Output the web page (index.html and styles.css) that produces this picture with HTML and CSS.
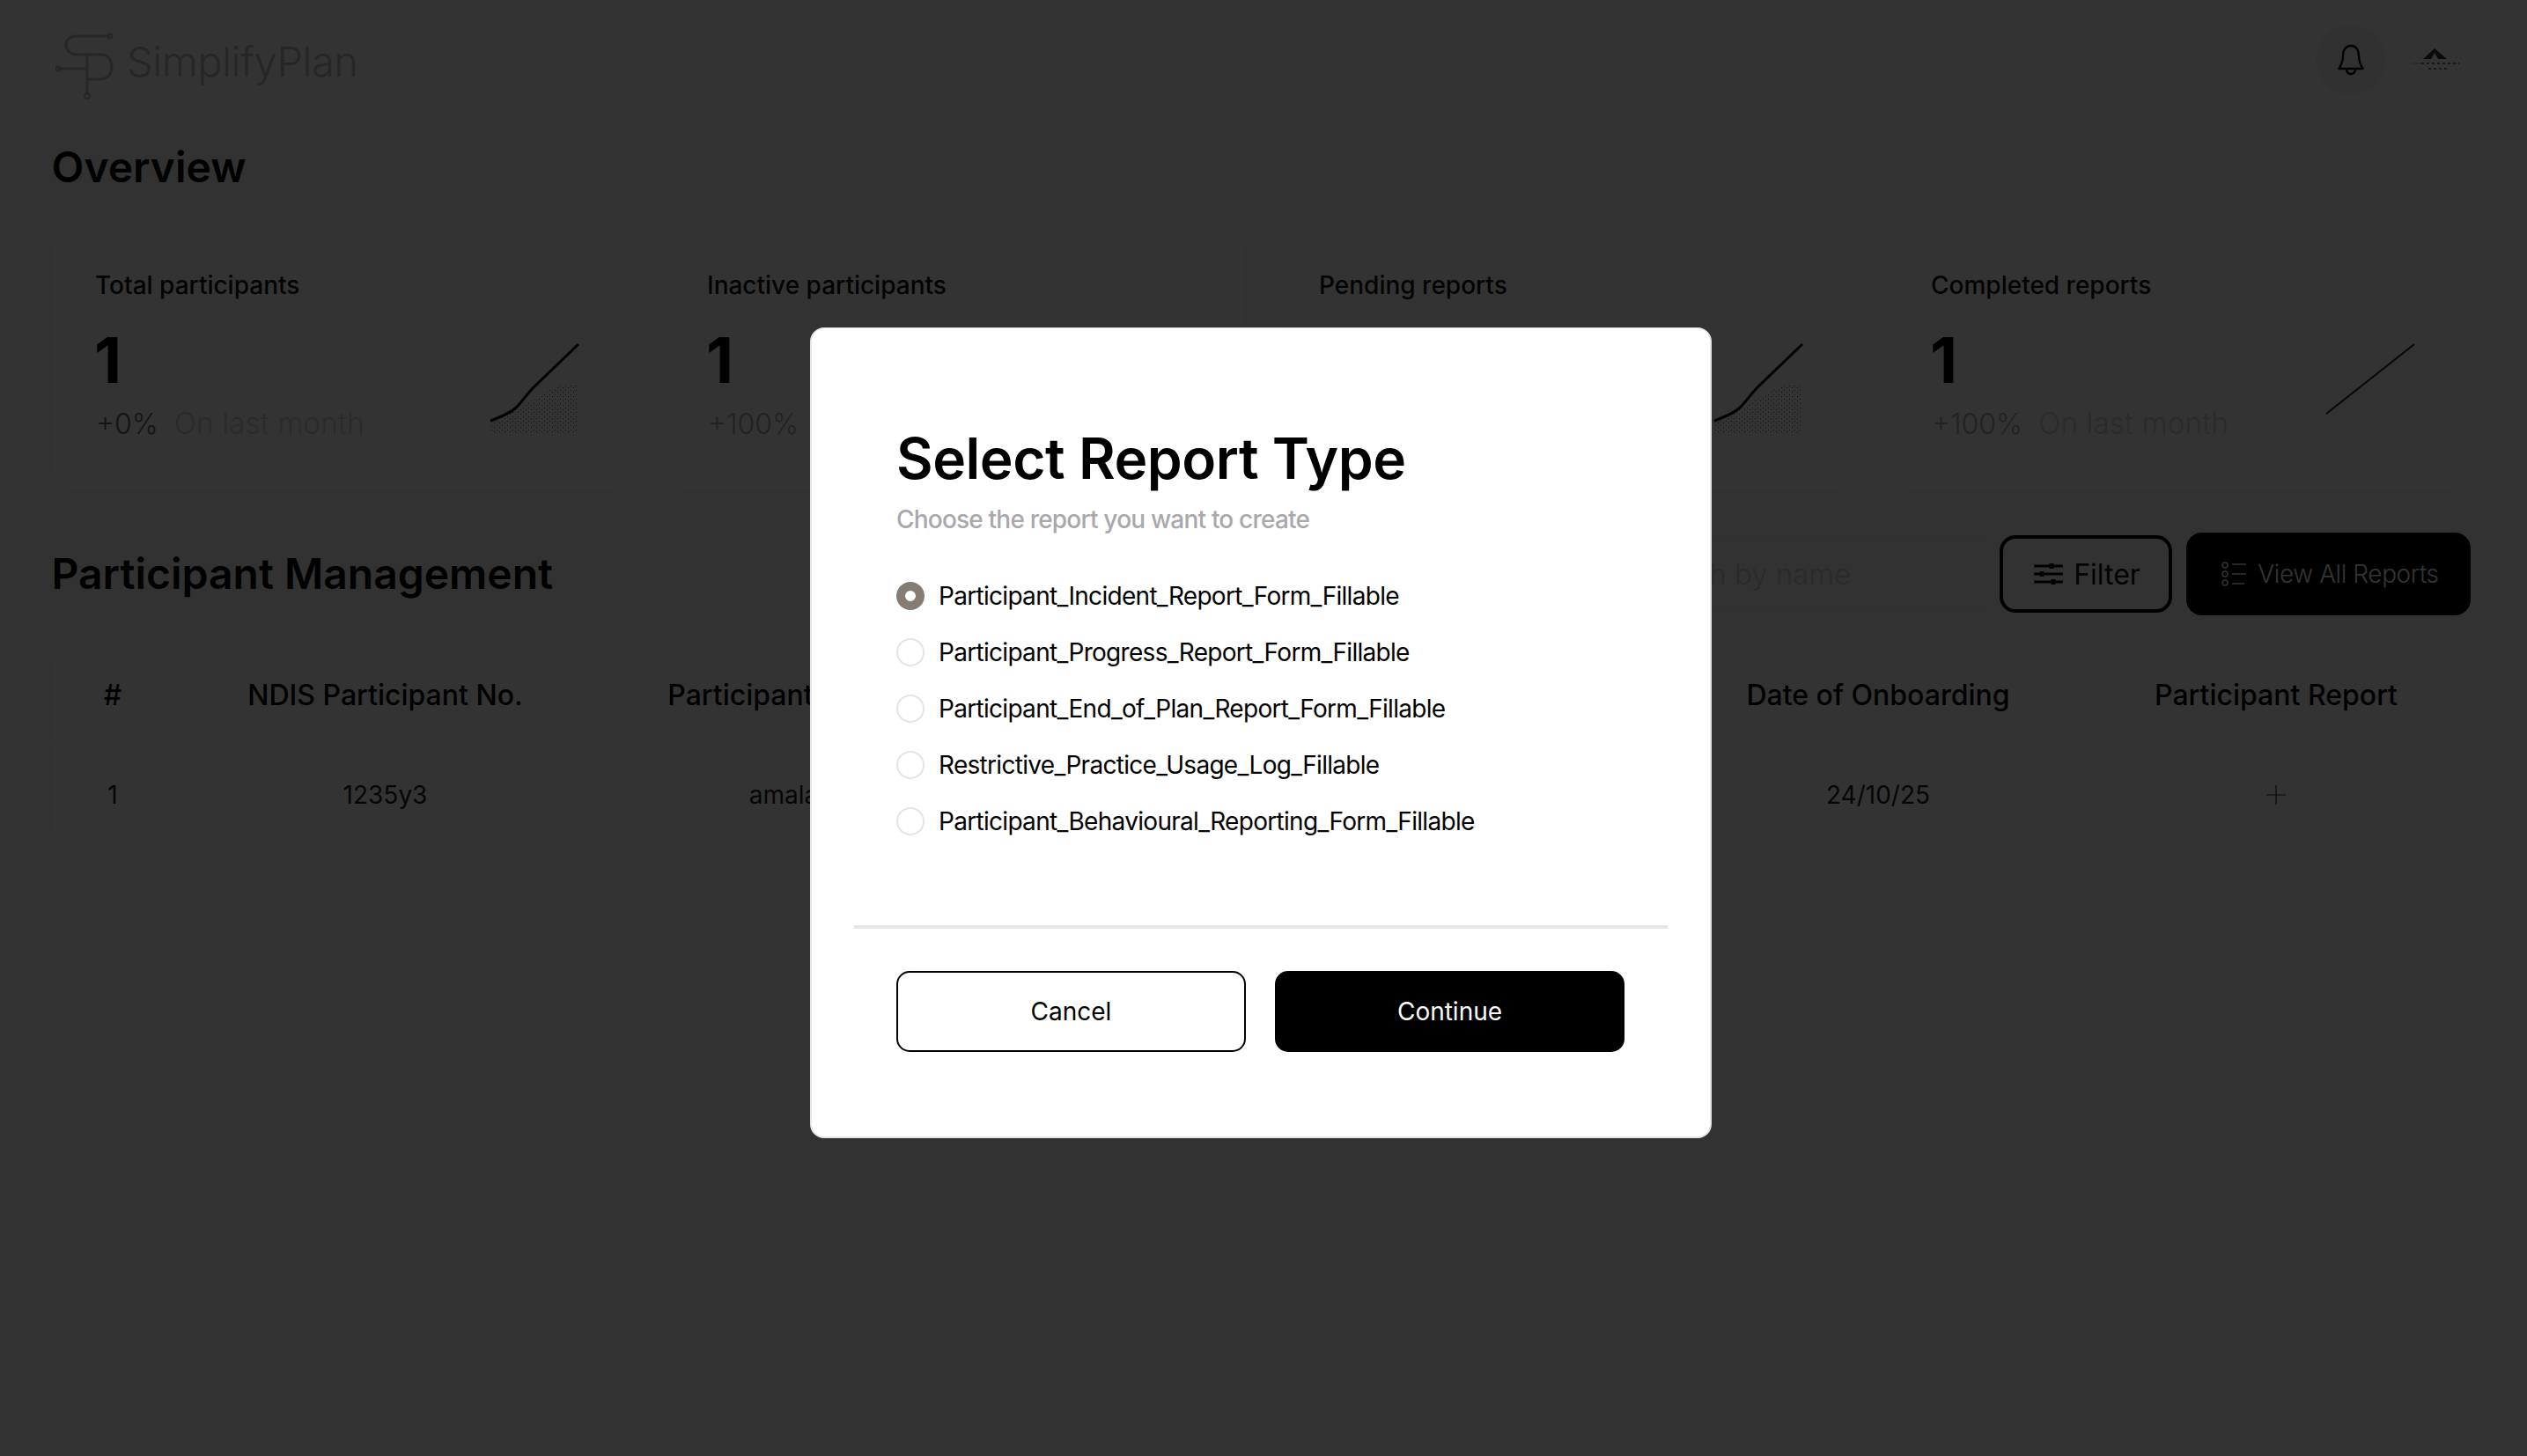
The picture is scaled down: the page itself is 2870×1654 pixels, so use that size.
FILE: index.html
```html
<!DOCTYPE html>
<html lang="en">
<head>
<meta charset="utf-8">
<title>SimplifyPlan</title>
<link rel="stylesheet" href="styles.css">
</head>
<body>
<header class="topbar">
  <div class="brand">
    <svg class="brand-mark" viewBox="0 0 66 76" fill="none">
      <path d="M62 3H24C16 3 12 8 12 13C12 19 17 24 24 24H52C60 24 64 31 64 38C64 47 58 52 50 52H36" />
      <path d="M36 24V70" />
      <path d="M3 40H36" />
      <circle cx="62" cy="3" r="2.5"/><circle cx="3" cy="40" r="2.5"/><circle cx="36" cy="71" r="3"/>
    </svg>
    <span class="brand-name">SimplifyPlan</span>
  </div>
  <div class="top-actions">
    <div class="bell-wrap">
      <svg class="bell" viewBox="0 0 30 36" fill="none">
        <path d="M15 2C9 2 6 7 6 13C6 20 4 24 1.5 28H28.5C26 24 24 20 24 13C24 7 21 2 15 2Z"/>
        <path d="M10 28C10 32 12 34 15 34C18 34 20 32 20 28"/>
      </svg>
    </div>
    <svg class="avatar" viewBox="0 0 56 26" fill="none">
      <path class="avatar-tri" d="M14 13L27 1L41 13H31L27 6L23 13Z"/>
      <path class="avatar-line" d="M12 18H55M20 24H42"/>
      <path class="avatar-fade" d="M1 18H12"/>
    </svg>
  </div>
</header>

<main class="content">
  <h1 class="heading overview">Overview</h1>
  <section class="cards">
    <article class="card">
      <div class="card-text">
        <div class="card-label">Total participants</div>
        <div class="card-num">1</div>
        <div class="card-delta"><span class="pct pct-dark">+0%</span><span class="period">On last month</span></div>
      </div>
      <svg class="spark" viewBox="0 0 100 100" fill="none">
        <defs>
          <pattern id="dots" width="6" height="5" patternUnits="userSpaceOnUse">
            <rect x="1" y="2" width="1" height="1" class="dot"/>
            <rect x="4" y="4" width="1" height="1" class="dot"/>
          </pattern>
        </defs>
        <path class="spark-area" d="M0 90L40 68L76 47L100 47V100H0Z"/>
        <path class="spark-line" d="M0 87C10 83 20 80 28 73C36 66 40 58 50 48L100 0"/>
      </svg>
    </article>
    <article class="card">
      <div class="card-text">
        <div class="card-label">Inactive participants</div>
        <div class="card-num">1</div>
        <div class="card-delta"><span class="pct">+100%</span><span class="period">On last month</span></div>
      </div>
      <svg class="spark" viewBox="0 0 100 100" fill="none">
        <path class="spark-area" d="M0 90L40 68L76 47L100 47V100H0Z"/>
        <path class="spark-line" d="M0 87C10 83 20 80 28 73C36 66 40 58 50 48L100 0"/>
      </svg>
    </article>
    <article class="card">
      <div class="card-text">
        <div class="card-label">Pending reports</div>
        <div class="card-num">1</div>
        <div class="card-delta"><span class="pct">+100%</span><span class="period">On last month</span></div>
      </div>
      <svg class="spark" viewBox="0 0 100 100" fill="none">
        <path class="spark-area" d="M0 90L40 68L76 47L100 47V100H0Z"/>
        <path class="spark-line" d="M0 87C10 83 20 80 28 73C36 66 40 58 50 48L100 0"/>
      </svg>
    </article>
    <article class="card">
      <div class="card-text">
        <div class="card-label">Completed reports</div>
        <div class="card-num">1</div>
        <div class="card-delta"><span class="pct">+100%</span><span class="period">On last month</span></div>
      </div>
      <svg class="spark" viewBox="0 0 100 100" fill="none">
        <path class="spark-area-flat" d="M0 79L100 0V100H0Z"/>
        <path class="spark-line-thin" d="M0 79L100 0"/>
      </svg>
    </article>
  </section>

  <section class="section-row">
    <h2 class="heading">Participant Management</h2>
    <div class="tools">
      <div class="search">Search by name</div>
      <button class="btn-filter">
        <svg class="icon-filter" viewBox="0 0 34 26" fill="none">
          <path d="M1 4H34M1 13H34M1 22H34"/>
          <path class="knob" d="M21 1V7M10 10V16M23 19V25"/>
        </svg>
        Filter
      </button>
      <button class="btn-view">
        <svg class="icon-list" viewBox="0 0 28 28" fill="none">
          <circle cx="4" cy="4" r="3"/><circle cx="4" cy="14" r="3"/><circle cx="4" cy="24" r="3"/>
          <path d="M12 3H28M12 14H28M12 25H26"/>
        </svg>
        View All Reports
      </button>
    </div>
  </section>

  <section class="table">
    <div class="table-row table-head">
      <div>#</div>
      <div>NDIS Participant No.</div>
      <div>Participant Name</div>
      <div></div>
      <div>Date of Onboarding</div>
      <div>Participant Report</div>
    </div>
    <div class="table-row table-body">
      <div>1</div>
      <div>1235y3</div>
      <div>amala</div>
      <div></div>
      <div>24/10/25</div>
      <div>
        <svg class="plus" viewBox="0 0 24 24" fill="none"><path d="M12 1V23M1 12H23"/></svg>
      </div>
    </div>
  </section>
</main>

<div class="overlay">
  <div class="modal">
    <div class="modal-body">
      <h3 class="modal-title">Select Report Type</h3>
      <p class="modal-sub">Choose the report you want to create</p>
      <ul class="options">
        <li class="option"><span class="radio radio-on"></span>Participant_Incident_Report_Form_Fillable</li>
        <li class="option"><span class="radio"></span>Participant_Progress_Report_Form_Fillable</li>
        <li class="option"><span class="radio"></span>Participant_End_of_Plan_Report_Form_Fillable</li>
        <li class="option"><span class="radio"></span>Restrictive_Practice_Usage_Log_Fillable</li>
        <li class="option"><span class="radio"></span>Participant_Behavioural_Reporting_Form_Fillable</li>
      </ul>
    </div>
    <div class="divider"></div>
    <div class="modal-foot">
      <button class="btn btn-cancel">Cancel</button>
      <button class="btn btn-continue">Continue</button>
    </div>
  </div>
</div>
</body>
</html>
```

FILE: styles.css
```css
* { box-sizing: border-box; }
html, body { margin: 0; height: 100%; }
body {
  background: #f9f9f9;
  font-family: Inter, "Liberation Sans", sans-serif;
  color: #000;
  overflow: hidden;
}
.topbar {
  height: 125px;
  background: #fff;
  display: flex;
  align-items: center;
  justify-content: space-between;
  padding: 11px 76px 0 63px;
}
.brand { display: flex; align-items: center; gap: 15px; }
.brand-mark { width: 66px; height: 76px; margin-top: 15px; stroke: #bdbdbd; stroke-width: 3; }
.brand-mark circle { stroke-width: 2; }
.brand-name { font-size: 47px; font-weight: 300; color: #bcbcbc; letter-spacing: -0.5px; margin-top: 2px; }
.top-actions { display: flex; align-items: center; gap: 28px; }
.bell-wrap {
  width: 80px; height: 80px; border-radius: 50%; background: #f4f4f4;
  display: flex; align-items: center; justify-content: center;
}
.bell { width: 30px; height: 36px; stroke: #000; stroke-width: 2.4; stroke-linejoin: round; }
.avatar { width: 56px; height: 26px; margin-top: -2px; }
.avatar-tri { fill: #333; }
.avatar-line { stroke: #777; stroke-width: 2; stroke-dasharray: 3 3; }
.avatar-fade { stroke: #ddd; stroke-width: 2; }

.content { padding: 0 64px 0 60px; }
.heading { margin: 0 0 0 -1.5px; font-size: 48px; line-height: 58px; font-weight: 600; }
.overview { margin: 36px 0 37px -1.5px; }

.cards {
  display: grid;
  grid-template-columns: repeat(4, 1fr);
  gap: 38px;
  margin-right: 4px;
}
.card {
  height: 300px;
  background: #fff;
  border-radius: 26px;
  padding: 50px 60px 65px 49px;
  display: flex;
  justify-content: space-between;
}
.card-text { display: flex; flex-direction: column; }
.card-label { font-size: 28px; line-height: 36px; font-weight: 500; color: #111; margin-left: -1px; }
.card-num { font-size: 72px; line-height: 72px; font-weight: 700; margin: 31px 0 0 -2px; }
.card-delta { display: flex; align-items: baseline; gap: 18px; margin-top: 16px; font-size: 32px; line-height: 40px; font-weight: 300; }
.pct { color: #aaa; }
.pct-dark { color: #666; }
.period { color: #d4d4d4; font-size: 33.5px; }
.spark { width: 100px; height: 100px; align-self: flex-end; flex: none; overflow: visible; }
.spark-area { fill: url(#dots); }
.dot { fill: #555; }
.spark-area-flat { fill: #f8f8f8; }
.spark-line { stroke: #000; stroke-width: 3; }
.spark-line-thin { stroke: #222; stroke-width: 2; }

.section-row {
  display: flex;
  align-items: center;
  justify-content: space-between;
  margin-top: 49px;
  height: 94px;
}
.tools { display: flex; align-items: center; gap: 16px; }
.search {
  width: 470px; height: 88px; margin-right: 5px;
  border: 1px solid #eee; border-radius: 16px 0 0 16px; border-right: 0;
  display: flex; align-items: center; padding-left: 72px;
  font-size: 33px; font-weight: 300; color: #d0d0d0;
}
.btn-filter {
  width: 196px; height: 88px;
  background: transparent;
  border: 4px solid #000;
  border-radius: 18px;
  display: flex; align-items: center; justify-content: center; gap: 12px;
  font: 400 32px Inter, sans-serif; color: #111;
  padding: 0 0 0 2px;
}
.icon-filter { width: 34px; height: 26px; stroke: #000; stroke-width: 3; }
.knob { stroke-width: 5; }
.btn-view {
  width: 323px; height: 94px;
  background: #000;
  border: 0;
  border-radius: 18px;
  display: flex; align-items: center; justify-content: center; gap: 13px;
  font: 300 28px Inter, sans-serif; color: #fff; letter-spacing: -0.4px;
  padding: 0 0 0 4px;
}
.icon-list { width: 28px; height: 28px; stroke: #fff; stroke-width: 1.5; }

.table {
  margin-top: 36px;
  margin-right: 4px;
  background: #fff;
  border-radius: 20px;
  height: 223px;
  overflow: hidden;
}
.table-row {
  display: grid;
  grid-template-columns: 136px 483px 422px 799px 466px 438px;
  align-items: center;
  text-align: center;
}
.table-head { height: 110px; font-size: 32px; font-weight: 500; border-bottom: 1px solid #f8f8f8; }
.table-body { height: 113px; font-size: 28px; font-weight: 400; color: #222; padding-top: 3px; }
.plus { display: block; margin: 0 auto; width: 24px; height: 24px; stroke: #333; stroke-width: 1.2; }

.overlay {
  position: fixed;
  inset: 0;
  background: rgba(0, 0, 0, 0.8);
  display: flex;
  align-items: center;
  justify-content: center;
  padding: 11px 6px 0 0;
}
.modal {
  width: 1024px;
  height: 921px;
  background: #fff;
  border-radius: 16px;
  border: 2px solid #e6e6e6;
  border-top-width: 1px;
  display: flex;
  flex-direction: column;
}
.modal-body { padding: 110px 96px 0 96px; flex: 1; }
.modal-title { margin: 0; font-size: 64px; line-height: 76px; font-weight: 600; letter-spacing: -0.45px; }
.modal-sub { margin: 13px 0 0; font-size: 28px; line-height: 36px; font-weight: 500; color: #a8a8ad; letter-spacing: -0.8px; }
.options { list-style: none; margin: 37px 0 0; padding: 0; }
.option { height: 64px; display: flex; align-items: center; gap: 16px; font-size: 28px; font-weight: 400; letter-spacing: -0.7px; }
.radio {
  width: 32px; height: 32px; border-radius: 50%;
  background: #fff;
  border: 2px solid #e4e4e4;
  flex: none;
}
.radio-on { border: 10px solid #857c73; }
.divider { height: 4px; background: #e6e6e6; margin: 0 48px; flex: none; }
.modal-foot { display: flex; gap: 33px; padding: 48px 96px 96px; flex: none; }
.btn {
  width: 397px; height: 92px;
  border-radius: 15px;
  font: 400 28px Inter, sans-serif;
}
.btn-cancel { background: #fff; border: 2px solid #000; color: #000; }
.btn-continue { background: #000; border: 0; color: #fff; }
```
